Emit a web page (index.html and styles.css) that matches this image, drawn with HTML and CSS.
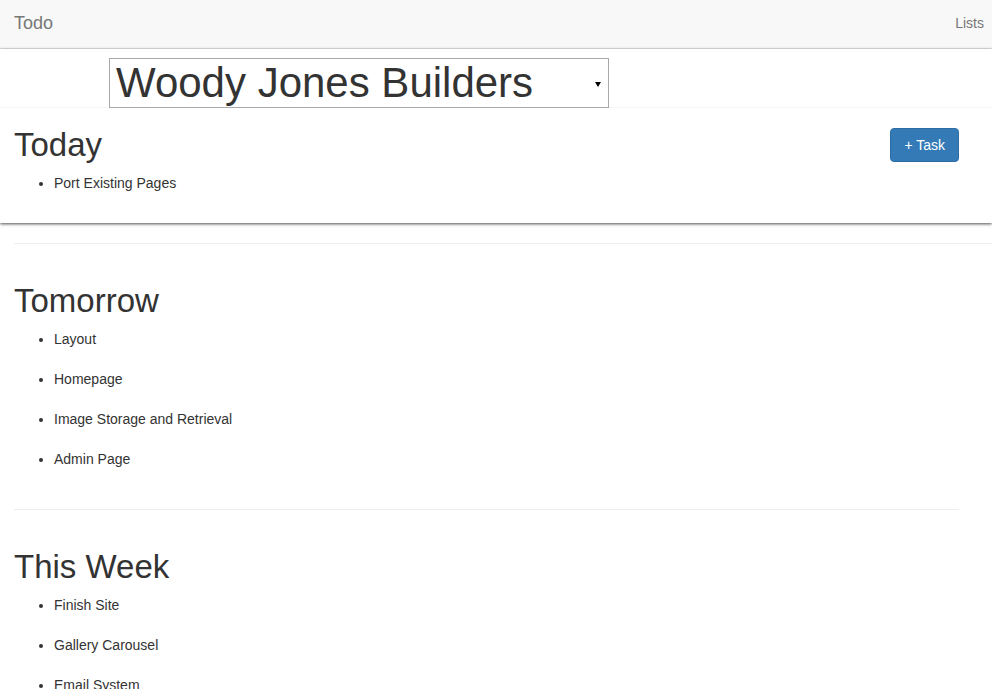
FILE: index.html
```html
<!DOCTYPE html>
<html lang="en">
<head>
<meta charset="utf-8">
<title>Todo</title>
<link rel="stylesheet" href="styles.css">
</head>
<body>
<nav class="navbar">
  <a class="brand" href="#">Todo</a>
  <a class="nav-link" href="#">Lists</a>
</nav>
<div class="panel">
  <div class="select-row">
    <div class="select-box">
      <span class="select-text">Woody Jones Builders</span>
      <span class="caret"></span>
    </div>
  </div>
  <div class="section-head">
    <h2 class="heading">Today</h2>
    <button class="btn-primary" type="button">+ Task</button>
  </div>
  <ul class="tasks">
    <li>Port Existing Pages</li>
  </ul>
</div>
<hr class="rule rule-wide">
<main class="content">
  <section class="section">
    <h2 class="heading">Tomorrow</h2>
    <ul class="tasks">
      <li>Layout</li>
      <li>Homepage</li>
      <li>Image Storage and Retrieval</li>
      <li>Admin Page</li>
    </ul>
  </section>
  <hr class="rule">
  <section class="section">
    <h2 class="heading">This Week</h2>
    <ul class="tasks">
      <li>Finish Site</li>
      <li>Gallery Carousel</li>
      <li>Email System</li>
    </ul>
  </section>
</main>
</body>
</html>
```
FILE: styles.css
```css
html, body {
  margin: 0;
  padding: 0;
}
body {
  font-family: "Liberation Sans", Arial, sans-serif;
  font-size: 14px;
  line-height: 20px;
  color: #333;
  background: #fff;
  overflow: hidden;
}
.navbar {
  display: flex;
  justify-content: space-between;
  align-items: flex-start;
  height: 48px;
  padding: 0 8px 0 14px;
  background: #f8f8f8;
  border-bottom: 1px solid #e7e7e7;
}
.brand {
  font-size: 18px;
  line-height: 20px;
  padding-top: 13px;
  color: #777;
  text-decoration: none;
}
.nav-link {
  font-size: 14px;
  line-height: 20px;
  padding-top: 13px;
  color: #777;
  text-decoration: none;
}
.panel {
  position: relative;
  z-index: 2;
  background: #fff;
  padding-bottom: 10px;
  box-shadow: 0 1px 3px rgba(0, 0, 0, 0.7);
}
.select-row {
  box-sizing: border-box;
  height: 59px;
  padding: 9px 0 0 109px;
  border-bottom: 1px solid #f6f6f6;
}
.select-box {
  box-sizing: border-box;
  width: 500px;
  height: 50px;
  display: flex;
  align-items: center;
  justify-content: space-between;
  padding: 0 7px 0 6px;
  border: 1px solid #a9a9a9;
  background: #fff;
  color: #333;
  font-size: 42px;
  line-height: 1;
}
.select-text {
  white-space: nowrap;
}
.caret {
  width: 0;
  height: 0;
  border-left: 3px solid transparent;
  border-right: 3px solid transparent;
  border-top: 5px solid #000;
  margin-top: 2px;
}
.section-head {
  display: flex;
  justify-content: space-between;
  align-items: flex-start;
  padding: 19px 33px 0 14px;
}
.heading {
  margin: 0 0 10px 0;
  font-size: 33px;
  line-height: 36px;
  font-weight: 400;
  color: #333;
}
.section .heading {
  margin-top: 19px;
}
.btn-primary {
  margin-top: 1px;
  height: 34px;
  padding: 6px 13px;
  font-family: "Liberation Sans", Arial, sans-serif;
  font-size: 14px;
  line-height: 20px;
  color: #fff;
  background: #337ab7;
  border: 1px solid #2e6da4;
  border-radius: 4px;
}
.tasks {
  margin: 0;
  padding: 0 0 0 54px;
}
.tasks li {
  margin-bottom: 20px;
}
.content {
  display: flex;
  flex-direction: column;
  padding: 0 33px 0 14px;
}
.section .tasks {
  padding-left: 40px;
}
.rule {
  margin: 20px 0;
  border: 0;
  border-top: 1px solid #eee;
  height: 0;
  width: 100%;
}
.rule-wide {
  margin-left: 14px;
  width: auto;
}
```
